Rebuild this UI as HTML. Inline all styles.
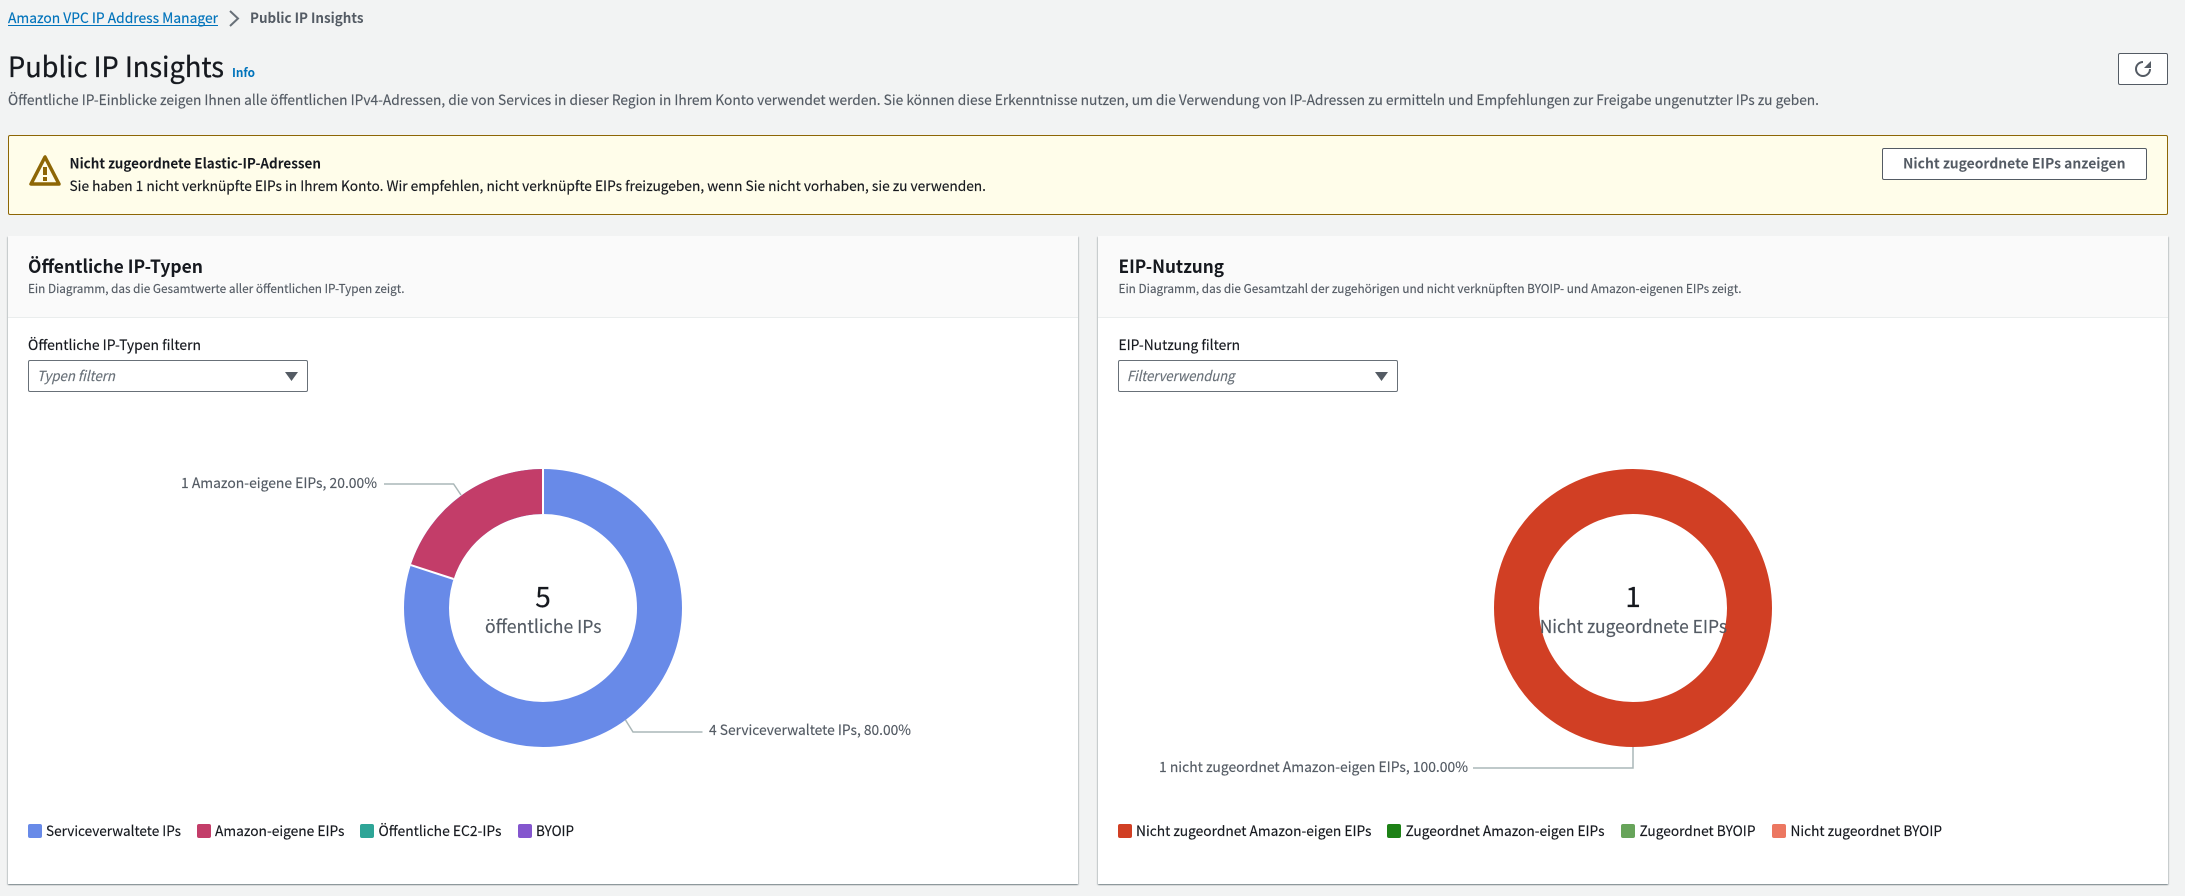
<!DOCTYPE html>
<html lang="de">
<head>
<meta charset="utf-8">
<title>Public IP Insights</title>
<style>
html,body{margin:0;padding:0;width:2185px;height:896px;overflow:hidden;background:#f2f3f3}
.abs{position:absolute;box-sizing:border-box}
.card{background:#fff;box-shadow:0 1px 1px 0 rgba(0,28,36,.3),1px 1px 1px 0 rgba(0,28,36,.15),-1px 1px 1px 0 rgba(0,28,36,.15)}
.cardhead{background:#fafafa;border-bottom:1px solid #eaeded}
.select{background:#fff;border:1px solid #687078;border-radius:2px}
.btn{background:#fff;border:1px solid #545b64;border-radius:2px}
svg{position:absolute;left:0;top:0}
text{font-family:"Noto Sans CJK SC","Liberation Sans",sans-serif;fill:#16191f;stroke:#16191f;stroke-width:.15px;font-size:14px}
.g{fill:#545b64;stroke:#545b64}
.blue{fill:#0073bb;stroke:#0073bb}
.i{font-style:italic;fill:#687078;stroke:#687078}
.b{font-weight:700;stroke-width:0}
</style>
</head>
<body>
<div class="abs" style="left:8px;top:135px;width:2160px;height:80px;background:#fffdea;border:1px solid #8d6605;border-radius:2px"></div>
<div class="abs btn" style="left:1882px;top:148px;width:265px;height:32px"></div>
<div class="abs btn" style="left:2118px;top:53px;width:50px;height:32px"></div>

<div class="abs card" style="left:8px;top:236px;width:1070px;height:648px"></div>
<div class="abs cardhead" style="left:8px;top:236px;width:1070px;height:82px"></div>
<div class="abs select" style="left:28px;top:360px;width:280px;height:32px"></div>

<div class="abs card" style="left:1098px;top:236px;width:1070px;height:648px"></div>
<div class="abs cardhead" style="left:1098px;top:236px;width:1070px;height:82px"></div>
<div class="abs select" style="left:1118px;top:360px;width:280px;height:32px"></div>

<div class="abs" style="left:28px;top:824px;width:14px;height:14px;border-radius:2px;background:#688ae8"></div>
<div class="abs" style="left:197px;top:824px;width:14px;height:14px;border-radius:2px;background:#c33d69"></div>
<div class="abs" style="left:360px;top:824px;width:14px;height:14px;border-radius:2px;background:#2ea597"></div>
<div class="abs" style="left:518px;top:824px;width:14px;height:14px;border-radius:2px;background:#8456ce"></div>
<div class="abs" style="left:1118px;top:824px;width:14px;height:14px;border-radius:2px;background:#d13f24"></div>
<div class="abs" style="left:1387px;top:824px;width:14px;height:14px;border-radius:2px;background:#1d8116"></div>
<div class="abs" style="left:1621px;top:824px;width:14px;height:14px;border-radius:2px;background:#67a45a"></div>
<div class="abs" style="left:1772px;top:824px;width:14px;height:14px;border-radius:2px;background:#ec7761"></div>

<svg width="2185" height="896" viewBox="0 0 2185 896" xmlns="http://www.w3.org/2000/svg">
  <text class="blue" x="8" y="23" textLength="210" lengthAdjust="spacingAndGlyphs">Amazon VPC IP Address Manager</text>
  <rect x="8" y="25" width="210" height="1" fill="#0073bb"/>
  <path d="M230 11l8 7.500-8 7.500" fill="none" stroke="#687078" stroke-width="2"/>
  <text class="g b" x="250" y="23" textLength="113.500" lengthAdjust="spacingAndGlyphs">Public IP Insights</text>

  <text x="8" y="77" style="font-size:28px;stroke-width:.3px" textLength="216" lengthAdjust="spacingAndGlyphs">Public IP Insights</text>
  <text class="blue b" x="232" y="77" style="font-size:12px" textLength="23" lengthAdjust="spacingAndGlyphs">Info</text>
  <text class="g" x="8" y="105" textLength="1811" lengthAdjust="spacingAndGlyphs">Öffentliche IP-Einblicke zeigen Ihnen alle öffentlichen IPv4-Adressen, die von Services in dieser Region in Ihrem Konto verwendet werden. Sie können diese Erkenntnisse nutzen, um die Verwendung von IP-Adressen zu ermitteln und Empfehlungen zur Freigabe ungenutzter IPs zu geben.</text>

  <path d="M2143 62A7 7 0 1 0 2150 69" fill="none" stroke="#545b64" stroke-width="2"/>
  <path d="M2151 61v7h-7z" fill="#545b64"/>

  <path d="M45 157L31 184h28z" fill="none" stroke="#8d6605" stroke-width="3.500" stroke-linejoin="round"/>
  <rect x="43" y="167" width="4" height="8" fill="#8d6605"/>
  <rect x="43" y="177" width="4" height="4" fill="#8d6605"/>
  <text class="b" x="69.500" y="168.500" textLength="251.500" lengthAdjust="spacingAndGlyphs">Nicht zugeordnete Elastic-IP-Adressen</text>
  <text x="69.500" y="191" textLength="916.500" lengthAdjust="spacingAndGlyphs">Sie haben 1 nicht verknüpfte EIPs in Ihrem Konto. Wir empfehlen, nicht verknüpfte EIPs freizugeben, wenn Sie nicht vorhaben, sie zu verwenden.</text>
  <text class="g b" x="1903" y="168.500" textLength="222.500" lengthAdjust="spacingAndGlyphs">Nicht zugeordnete EIPs anzeigen</text>

  <text class="b" x="28" y="273" style="font-size:18px" textLength="175" lengthAdjust="spacingAndGlyphs">Öffentliche IP-Typen</text>
  <text class="g" x="28" y="293" style="font-size:12px" textLength="376.500" lengthAdjust="spacingAndGlyphs">Ein Diagramm, das die Gesamtwerte aller öffentlichen IP-Typen zeigt.</text>
  <text x="28" y="350" textLength="173" lengthAdjust="spacingAndGlyphs">Öffentliche IP-Typen filtern</text>
  <text class="i" x="37" y="381" textLength="78" lengthAdjust="spacingAndGlyphs">Typen filtern</text>
  <path d="M285 372h13l-6.500 9z" fill="#545b64"/>

  <text class="b" x="1118.500" y="273" style="font-size:18px" textLength="105.500" lengthAdjust="spacingAndGlyphs">EIP-Nutzung</text>
  <text class="g" x="1118.500" y="293" style="font-size:12px" textLength="623" lengthAdjust="spacingAndGlyphs">Ein Diagramm, das die Gesamtzahl der zugehörigen und nicht verknüpften BYOIP- und Amazon-eigenen EIPs zeigt.</text>
  <text x="1118.500" y="350" textLength="121.500" lengthAdjust="spacingAndGlyphs">EIP-Nutzung filtern</text>
  <text class="i" x="1127" y="381" textLength="107.500" lengthAdjust="spacingAndGlyphs">Filterverwendung</text>
  <path d="M1375 372h13l-6.500 9z" fill="#545b64"/>

  <!-- donut 1: centre 543,608 r 139 / 94; stroke centre r 116.500, width 45 -->
  <circle cx="543" cy="608" r="116.500" fill="none" stroke="#688ae8" stroke-width="45"/>
  <path d="M543 469A139 139 0 0 0 410.800 565.100L453.600 579A94 94 0 0 1 543 514Z" fill="#c33d69"/>
  <path d="M543 469V514M410.800 565.100L453.600 579" stroke="#fff" stroke-width="2" fill="none"/>
  <path d="M384 484H453.600L461 495" fill="none" stroke="#aab7b8" stroke-width="1.500"/>
  <path d="M625.500 720L633 732H702.500" fill="none" stroke="#aab7b8" stroke-width="1.500"/>
  <text class="g" x="181" y="488" textLength="196" lengthAdjust="spacingAndGlyphs">1 Amazon-eigene EIPs, 20.00%</text>
  <text class="g" x="709" y="735" textLength="202" lengthAdjust="spacingAndGlyphs">4 Serviceverwaltete IPs, 80.00%</text>
  <text x="543" y="607" text-anchor="middle" style="font-size:28px">5</text>
  <text class="g" x="485" y="633" style="font-size:18px" textLength="116.500" lengthAdjust="spacingAndGlyphs">öffentliche IPs</text>

  <!-- donut 2 -->
  <circle cx="1633" cy="608" r="116.500" fill="none" stroke="#d13f24" stroke-width="45"/>
  <path d="M1633 747V768H1473" fill="none" stroke="#aab7b8" stroke-width="1.500"/>
  <text class="g" x="1159" y="772" textLength="309" lengthAdjust="spacingAndGlyphs">1 nicht zugeordnet Amazon-eigen EIPs, 100.00%</text>
  <text x="1633" y="607" text-anchor="middle" style="font-size:28px">1</text>
  <text class="g" x="1539.700" y="633" style="font-size:18px" textLength="187.300" lengthAdjust="spacingAndGlyphs">Nicht zugeordnete EIPs</text>

  <text x="46" y="836" textLength="135" lengthAdjust="spacingAndGlyphs">Serviceverwaltete IPs</text>
  <text x="215" y="836" textLength="129.500" lengthAdjust="spacingAndGlyphs">Amazon-eigene EIPs</text>
  <text x="378.500" y="836" textLength="123" lengthAdjust="spacingAndGlyphs">Öffentliche EC2-IPs</text>
  <text x="536" y="836" textLength="38" lengthAdjust="spacingAndGlyphs">BYOIP</text>
  <text x="1136" y="836" textLength="235.500" lengthAdjust="spacingAndGlyphs">Nicht zugeordnet Amazon-eigen EIPs</text>
  <text x="1405.500" y="836" textLength="199" lengthAdjust="spacingAndGlyphs">Zugeordnet Amazon-eigen EIPs</text>
  <text x="1639.500" y="836" textLength="116" lengthAdjust="spacingAndGlyphs">Zugeordnet BYOIP</text>
  <text x="1790.500" y="836" textLength="151.500" lengthAdjust="spacingAndGlyphs">Nicht zugeordnet BYOIP</text>
</svg>
</body>
</html>
